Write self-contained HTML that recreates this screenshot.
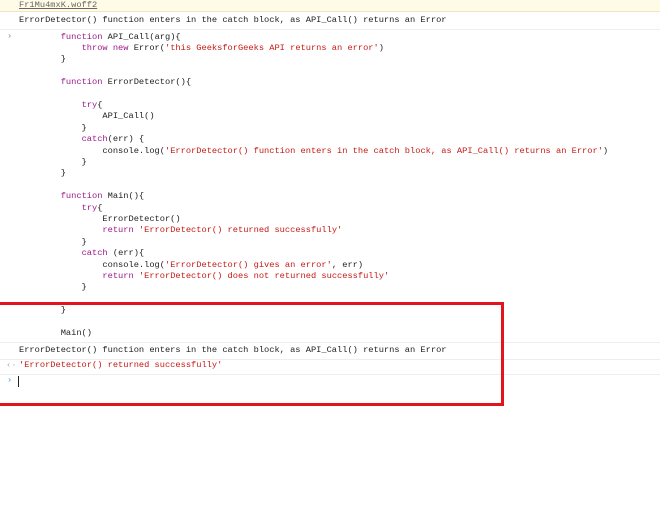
<!DOCTYPE html>
<html><head><style>
body{margin:0;width:660px;height:505px;background:#fff;position:relative;overflow:hidden;font-family:"Liberation Mono",monospace;font-size:8.7px;color:#222}
.row{position:absolute;left:0;width:660px}
pre{margin:0;font:inherit;line-height:11.4px;white-space:pre}
.k{color:#9a1a8a}.s{color:#c41a16}
</style></head><body>
<div class="row" style="top:0;height:11px;background:#fffbe6;border-bottom:1px solid #f0e6c0"><span style="position:absolute;left:19px;top:0;color:#666;text-decoration:underline;line-height:11px">Fr1Mu4mxK.woff2</span></div>
<div class="row" style="top:14px;height:15px;border-bottom:1px solid #eee"><span style="position:absolute;left:19px;top:1px;line-height:11px">ErrorDetector() function enters in the catch block, as API_Call() returns an Error</span></div>
<span style="position:absolute;left:7px;top:31px;color:#888;line-height:11px">›</span>
<pre style="position:absolute;left:19px;top:31.5px">        <span class="k">function</span> API_Call(arg){
            <span class="k">throw new</span> Error(<span class="s">'this GeeksforGeeks API returns an error'</span>)
        }

        <span class="k">function</span> ErrorDetector(){

            <span class="k">try</span>{
                API_Call()
            }
            <span class="k">catch</span>(err) {
                console.log(<span class="s">'ErrorDetector() function enters in the catch block, as API_Call() returns an Error'</span>)
            }
        }

        <span class="k">function</span> Main(){
            <span class="k">try</span>{
                ErrorDetector()
                <span class="k">return</span> <span class="s">'ErrorDetector() returned successfully'</span>
            }
            <span class="k">catch</span> (err){
                console.log(<span class="s">'ErrorDetector() gives an error'</span>, err)
                <span class="k">return</span> <span class="s">'ErrorDetector() does not returned successfully'</span>
            }

        }

        Main()</pre>
<div class="row" style="top:342px;height:16px;border-top:1px solid #eee;border-bottom:1px solid #eee"><span style="position:absolute;left:19px;top:2px;line-height:11px">ErrorDetector() function enters in the catch block, as API_Call() returns an Error</span></div>
<div class="row" style="top:359px;height:15px;border-bottom:1px solid #eee"><span style="position:absolute;left:6px;top:1px;color:#aaa;line-height:11px">‹·</span><span class="s" style="position:absolute;left:19px;top:1px;line-height:11px">'ErrorDetector() returned successfully'</span></div>
<span style="position:absolute;left:7px;top:375px;color:#4a8ae8;line-height:11px">›</span>
<div style="position:absolute;left:18px;top:376px;width:1px;height:11px;background:#222"></div>
<div style="position:absolute;left:-3px;top:302px;width:501px;height:98px;border:3px solid #e2141c"></div>
</body></html>
